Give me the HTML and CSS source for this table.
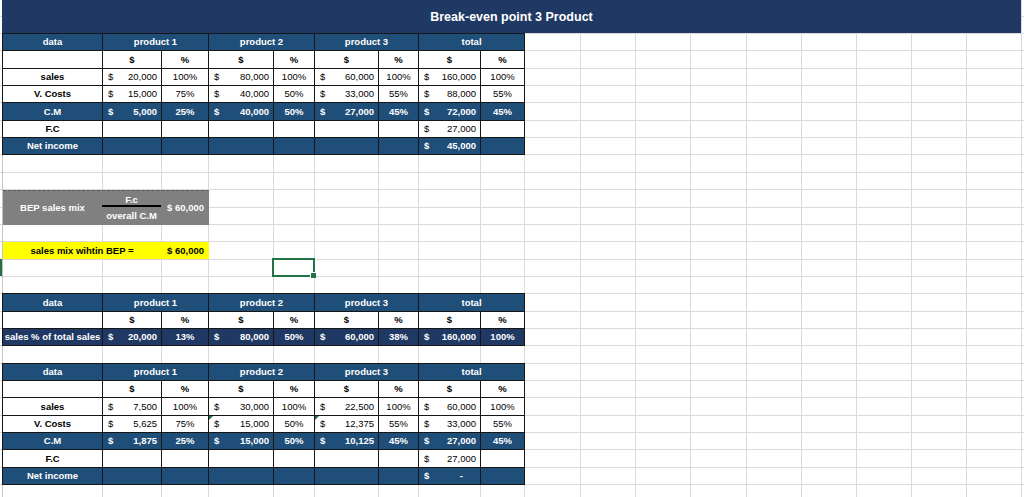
FILE: index.html
```html
<!DOCTYPE html>
<html>
<head>
<meta charset="utf-8">
<title>Break-even point 3 Product</title>
<link rel="stylesheet" href="styles.css">
</head>
<body>
<div class="sheet">
  <div class="title">Break-even point 3 Product</div>

  <div class="tbl">
    <div class="r hd"><div class="c">data</div><div class="c s2">product 1</div><div class="c s2">product 2</div><div class="c s2">product 3</div><div class="c s2">total</div></div>
    <div class="r wt sub"><div class="c"></div><div class="c">$</div><div class="c">%</div><div class="c">$</div><div class="c">%</div><div class="c">$</div><div class="c">%</div><div class="c">$</div><div class="c">%</div></div>
    <div class="r wt"><div class="c lbl">sales</div><div class="c acc"><span>$</span><span>20,000</span></div><div class="c">100%</div><div class="c acc"><span>$</span><span>80,000</span></div><div class="c">100%</div><div class="c acc"><span>$</span><span>60,000</span></div><div class="c">100%</div><div class="c acc"><span>$</span><span>160,000</span></div><div class="c">100%</div></div>
    <div class="r wt"><div class="c lbl">V. Costs</div><div class="c acc"><span>$</span><span>15,000</span></div><div class="c">75%</div><div class="c acc"><span>$</span><span>40,000</span></div><div class="c">50%</div><div class="c acc"><span>$</span><span>33,000</span></div><div class="c">55%</div><div class="c acc"><span>$</span><span>88,000</span></div><div class="c">55%</div></div>
    <div class="r bl"><div class="c">C.M</div><div class="c acc"><span>$</span><span>5,000</span></div><div class="c">25%</div><div class="c acc"><span>$</span><span>40,000</span></div><div class="c">50%</div><div class="c acc"><span>$</span><span>27,000</span></div><div class="c">45%</div><div class="c acc"><span>$</span><span>72,000</span></div><div class="c">45%</div></div>
    <div class="r wt"><div class="c lbl">F.C</div><div class="c"></div><div class="c"></div><div class="c"></div><div class="c"></div><div class="c"></div><div class="c"></div><div class="c acc"><span>$</span><span>27,000</span></div><div class="c"></div></div>
    <div class="r bl"><div class="c">Net income</div><div class="c"></div><div class="c"></div><div class="c"></div><div class="c"></div><div class="c"></div><div class="c"></div><div class="c acc"><span>$</span><span>45,000</span></div><div class="c"></div></div>
  </div>

  <div class="gap2"></div>

  <div class="bep">
    <div class="bep-l">BEP sales mix</div>
    <div class="bep-num">F.c</div>
    <div class="bep-v">$ 60,000</div>
    <div class="bep-den">overall C.M</div>
  </div>

  <div class="gap1"></div>

  <div class="mix">
    <div class="mix-l">sales mix wihtin BEP =</div>
    <div class="mix-v">$ 60,000</div>
  </div>

  <div class="selrow"><div class="rowmark"></div><div class="sel"></div></div>
  <div class="gap1"></div>

  <div class="tbl">
    <div class="r hd"><div class="c">data</div><div class="c s2">product 1</div><div class="c s2">product 2</div><div class="c s2">product 3</div><div class="c s2">total</div></div>
    <div class="r wt sub"><div class="c"></div><div class="c">$</div><div class="c">%</div><div class="c">$</div><div class="c">%</div><div class="c">$</div><div class="c">%</div><div class="c">$</div><div class="c">%</div></div>
    <div class="r nv"><div class="c">sales % of total sales</div><div class="c acc"><span>$</span><span>20,000</span></div><div class="c">13%</div><div class="c acc"><span>$</span><span>80,000</span></div><div class="c">50%</div><div class="c acc"><span>$</span><span>60,000</span></div><div class="c">38%</div><div class="c acc"><span>$</span><span>160,000</span></div><div class="c">100%</div></div>
  </div>

  <div class="gap1"></div>

  <div class="tbl">
    <div class="r hd"><div class="c">data</div><div class="c s2">product 1</div><div class="c s2">product 2</div><div class="c s2">product 3</div><div class="c s2">total</div></div>
    <div class="r wt sub"><div class="c"></div><div class="c">$</div><div class="c">%</div><div class="c">$</div><div class="c">%</div><div class="c">$</div><div class="c">%</div><div class="c">$</div><div class="c">%</div></div>
    <div class="r wt"><div class="c lbl">sales</div><div class="c acc"><span>$</span><span>7,500</span></div><div class="c">100%</div><div class="c acc"><span>$</span><span>30,000</span></div><div class="c">100%</div><div class="c acc"><span>$</span><span>22,500</span></div><div class="c">100%</div><div class="c acc"><span>$</span><span>60,000</span></div><div class="c">100%</div></div>
    <div class="r wt"><div class="c lbl">V. Costs</div><div class="c acc"><span>$</span><span>5,625</span></div><div class="c">75%</div><div class="c acc tri"><span>$</span><span>15,000</span></div><div class="c">50%</div><div class="c acc tri"><span>$</span><span>12,375</span></div><div class="c">55%</div><div class="c acc"><span>$</span><span>33,000</span></div><div class="c">55%</div></div>
    <div class="r bl"><div class="c">C.M</div><div class="c acc"><span>$</span><span>1,875</span></div><div class="c">25%</div><div class="c acc"><span>$</span><span>15,000</span></div><div class="c">50%</div><div class="c acc"><span>$</span><span>10,125</span></div><div class="c">45%</div><div class="c acc"><span>$</span><span>27,000</span></div><div class="c">45%</div></div>
    <div class="r wt"><div class="c lbl">F.C</div><div class="c"></div><div class="c"></div><div class="c"></div><div class="c"></div><div class="c"></div><div class="c"></div><div class="c acc"><span>$</span><span>27,000</span></div><div class="c"></div></div>
    <div class="r bl"><div class="c">Net income</div><div class="c"></div><div class="c"></div><div class="c"></div><div class="c"></div><div class="c"></div><div class="c"></div><div class="c acc"><span>$</span><span class="dash">-</span></div><div class="c"></div></div>
  </div>
</div>
</body>
</html>
```

FILE: styles.css
```css
* { box-sizing: border-box; }

html, body {
  margin: 0;
  padding: 0;
  background: #fff;
}

body {
  font-family: "Liberation Sans", Arial, sans-serif;
  font-size: 9.5px;
  color: #000;
}

.sheet {
  width: 1024px;
  height: 497px;
  overflow: hidden;
  padding-left: 2px;
  background:
    linear-gradient(#c4c4c4, #c4c4c4) 2px 0 / 1px 100% no-repeat,
    linear-gradient(#dadada, #dadada) 102px 0 / 1px 100% no-repeat,
    linear-gradient(#dadada, #dadada) 161px 0 / 1px 100% no-repeat,
    linear-gradient(#dadada, #dadada) 208px 0 / 1px 100% no-repeat,
    linear-gradient(#dadada, #dadada) 273px 0 / 1px 100% no-repeat,
    linear-gradient(#dadada, #dadada) 314px 0 / 1px 100% no-repeat,
    linear-gradient(#dadada, #dadada) 378px 0 / 1px 100% no-repeat,
    linear-gradient(#dadada, #dadada) 418px 0 / 1px 100% no-repeat,
    linear-gradient(#dadada, #dadada) 480px 0 / 1px 100% no-repeat,
    linear-gradient(#dadada, #dadada) 524px 0 / 1px 100% no-repeat,
    repeating-linear-gradient(to right, transparent 0 54.15px, #dadada 54.15px 55.15px) 525.5px 0 / 520px 100% no-repeat,
    repeating-linear-gradient(to bottom, #dadada 0 1px, transparent 1px 17.35px) 0 -1.7px / 100% 540px no-repeat,
    #fff;
}

.title {
  width: 1019px;
  height: 33px;
  background: #1f3864;
  color: #fff;
  font-weight: 700;
  font-size: 12.5px;
  display: flex;
  align-items: center;
  justify-content: center;
  padding-top: 1px;
}

/* data tables */
.tbl {
  display: grid;
  grid-template-columns: 99px 58px 46px 64px 40px 63px 39px 61px 43px;
  grid-auto-rows: 16.35px;
  gap: 1px;
  padding: 1px;
  width: 523px;
  background: #161616;
  margin-bottom: -1px;
}

.r { display: contents; }

.c {
  display: flex;
  align-items: center;
  justify-content: center;
  white-space: nowrap;
  overflow: hidden;
  line-height: 1;
}

.s2 { grid-column: span 2; }

.acc {
  justify-content: space-between;
  padding: 0 4px 0 5px;
}

.dash { padding-right: 13px; }

.r.hd > .c {
  background: #1f4e78;
  color: #fff;
  font-weight: 700;
}

.r.wt > .c {
  background: #fff;
  color: #000;
}

.r.sub > .c,
.lbl { font-weight: 700; }

.r.bl > .c {
  background: #1f4e78;
  color: #fff;
  font-weight: 700;
}

.r.nv > .c {
  background: #203864;
  color: #fff;
  font-weight: 700;
}

.tri { position: relative; }
.tri::before {
  content: "";
  position: absolute;
  left: 0;
  top: 0;
  border-top: 4px solid #1e7145;
  border-right: 4px solid transparent;
}

.gap1 { height: 17.35px; }
.gap2 { height: 34.7px; }

/* BEP formula block */
.bep {
  margin: 1px 0 -1px 1px;
  width: 206px;
  height: 34.7px;
  background: #808080;
  border-top: 1px dashed #5a5a5a;
  color: #fff;
  font-weight: 700;
  display: grid;
  grid-template-columns: 99px 59px 48px;
  grid-template-rows: 16px 1fr;
}

.bep-l {
  grid-column: 1;
  grid-row: 1 / 3;
  display: flex;
  align-items: center;
  justify-content: center;
}

.bep-num {
  grid-column: 2;
  grid-row: 1;
  border-bottom: 2px solid #000;
  display: flex;
  align-items: center;
  justify-content: center;
  padding-top: 2px;
}

.bep-den {
  grid-column: 2;
  grid-row: 2;
  display: flex;
  align-items: center;
  justify-content: center;
}

.bep-v {
  grid-column: 3;
  grid-row: 1 / 3;
  display: flex;
  align-items: center;
  justify-content: flex-end;
  padding-right: 5px;
}

/* yellow sales mix row */
.mix {
  margin: 1px 0 -1px 1px;
  width: 206px;
  height: 17.35px;
  background: #ffff00;
  font-weight: 700;
  display: grid;
  grid-template-columns: 158px 48px;
  align-items: center;
}

.mix-l { text-align: center; }
.mix-v { text-align: right; padding-right: 5px; }

/* active cell selection */
.selrow {
  height: 17.35px;
  position: relative;
}

.sel {
  position: absolute;
  left: 270px;
  top: -0.5px;
  width: 43px;
  height: 19px;
  border: 2px solid #217346;
}

.sel::after {
  content: "";
  position: absolute;
  right: -3px;
  bottom: -3px;
  width: 5px;
  height: 5px;
  background: #217346;
  border-left: 1px solid #fff;
  border-top: 1px solid #fff;
}

.rowmark {
  position: absolute;
  left: -2px;
  top: 1px;
  width: 2px;
  height: 17px;
  background: #217346;
}
```
